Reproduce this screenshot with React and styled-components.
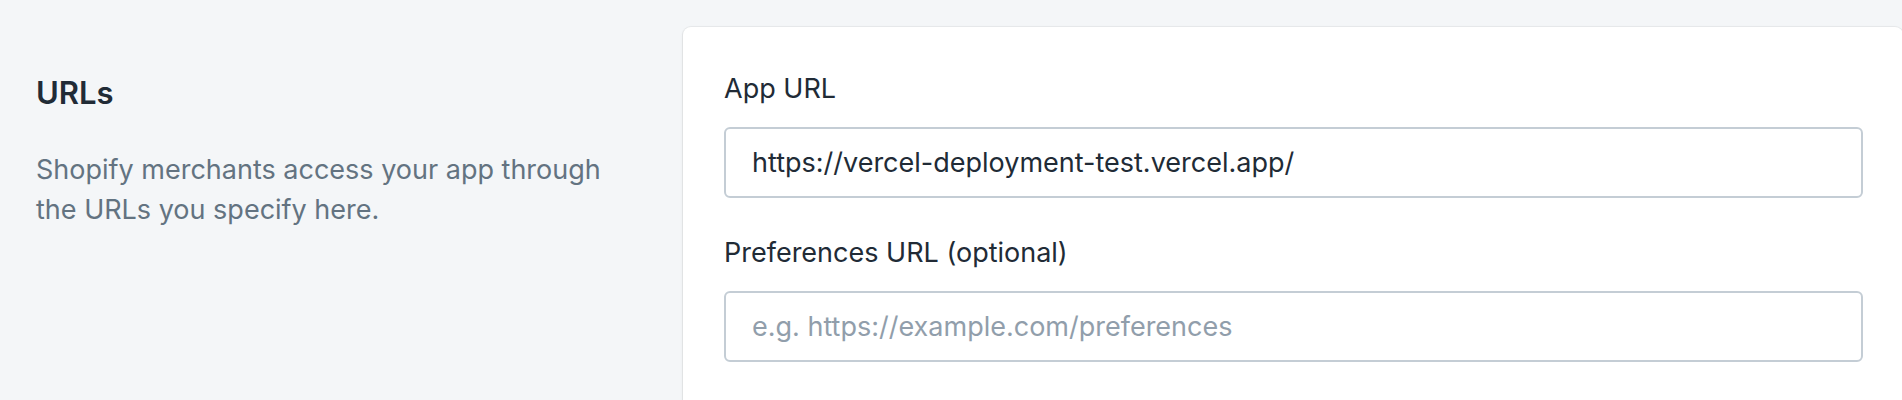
import React from "react";
import styled, { createGlobalStyle } from "styled-components";

const GlobalStyle = createGlobalStyle`
  html, body {
    margin: 0;
    padding: 0;
    background: #f4f6f8;
    font-family: Inter, "Noto Sans", "Liberation Sans", sans-serif;
    color: #212b36;
    -webkit-font-smoothing: antialiased;
  }
`;

const Page = styled.div`
  display: flex;
  align-items: flex-start;
  padding: 27px 0 0 36px;
  height: 400px;
  box-sizing: border-box;
  overflow: hidden;
`;

const Annotation = styled.div`
  flex: 0 0 580px;
  padding-top: 46px;
`;

const Heading = styled.h2`
  margin: 0;
  font-size: 31px;
  line-height: 40px;
  font-weight: 600;
  color: #212b36;
`;

const Description = styled.p`
  margin: 37px 0 0;
  font-size: 27px;
  line-height: 40px;
  color: #637381;
`;

const Card = styled.div`
  flex: 1;
  margin-left: 67px;
  margin-right: -1px;
  background: #ffffff;
  border-radius: 8px 8px 0 0;
  box-shadow: 0 0 0 1px rgba(63, 63, 68, 0.06), 0 1px 3px 0 rgba(63, 63, 68, 0.12);
  padding: 43px 40px 40px 41px;
  min-height: 420px;
  box-sizing: border-box;
`;

const Field = styled.div`
  display: flex;
  flex-direction: column;
  gap: 19px;

  & + & {
    margin-top: 36px;
  }
`;

const Label = styled.label`
  font-size: 27px;
  line-height: 38px;
  color: #212b36;
`;

const Input = styled.input`
  box-sizing: border-box;
  height: 71px;
  width: 100%;
  padding: 0 26px;
  border: 2px solid #c4cdd5;
  border-radius: 6px;
  background: #ffffff;
  font-family: inherit;
  font-size: 27px;
  color: #212b36;
  outline: none;

  &::placeholder {
    color: #919eab;
    opacity: 1;
  }
`;

const fields = [
  { id: "app-url", label: "App URL", value: "https://vercel-deployment-test.vercel.app/" },
  { id: "pref-url", label: "Preferences URL (optional)", placeholder: "e.g. https://example.com/preferences" },
];

export default function App() {
  return (
    <>
      <GlobalStyle />
      <Page>
        <Annotation>
          <Heading>URLs</Heading>
          <Description>
            Shopify merchants access your app through the URLs you specify here.
          </Description>
        </Annotation>
        <Card>
          {fields.map((f) => (
            <Field key={f.id}>
              <Label htmlFor={f.id}>{f.label}</Label>
              <Input
                id={f.id}
                defaultValue={f.value}
                placeholder={f.placeholder}
              />
            </Field>
          ))}
        </Card>
      </Page>
    </>
  );
}
